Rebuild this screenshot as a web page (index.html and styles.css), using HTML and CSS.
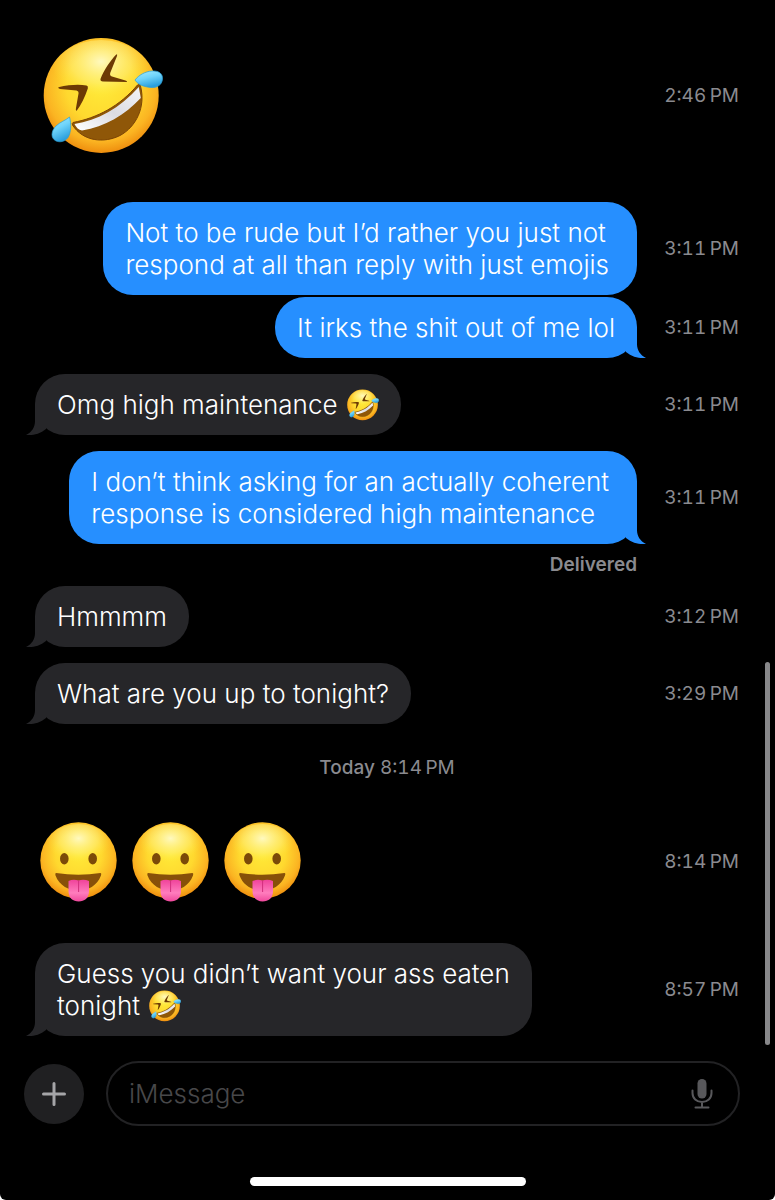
FILE: index.html
```html
<!DOCTYPE html>
<html lang="en">
<head>
    <meta charset="UTF-8">
    <meta name="viewport" content="width=device-width, initial-scale=1.0">
    <title>Messages</title>
    <link rel="stylesheet" href="styles.css">
</head>
<body>
    <!-- Shared emoji drawings -->
    <svg class="sprite" aria-hidden="true">
        <defs>
            <radialGradient id="face" cx="0.5" cy="0.42" r="0.6">
                <stop offset="0" stop-color="#ffea38"/>
                <stop offset="0.5" stop-color="#ffd92f"/>
                <stop offset="0.8" stop-color="#fbb422"/>
                <stop offset="1" stop-color="#ec860a"/>
            </radialGradient>
            <radialGradient id="shine" cx="0.5" cy="0.3" r="0.5">
                <stop offset="0" stop-color="#fffccf" stop-opacity="0.9"/>
                <stop offset="0.6" stop-color="#fff48a" stop-opacity="0.45"/>
                <stop offset="1" stop-color="#ffea3a" stop-opacity="0"/>
            </radialGradient>
            <linearGradient id="tear" x1="0" y1="0" x2="0.4" y2="1">
                <stop offset="0" stop-color="#a5ecff"/>
                <stop offset="0.5" stop-color="#6fd4fa"/>
                <stop offset="1" stop-color="#2b9fde"/>
            </linearGradient>
            <linearGradient id="teeth" x1="0" y1="1" x2="1" y2="0">
                <stop offset="0" stop-color="#fff"/>
                <stop offset="0.5" stop-color="#dcdce2"/>
                <stop offset="1" stop-color="#f4f4f6"/>
            </linearGradient>
            <linearGradient id="tongue" x1="0" y1="0" x2="0" y2="1">
                <stop offset="0" stop-color="#f0439b"/>
                <stop offset="0.6" stop-color="#ff7dbd"/>
                <stop offset="1" stop-color="#f0489c"/>
            </linearGradient>
        </defs>
        <symbol id="rofl" viewBox="0 0 120 120">
            <circle cx="58.2" cy="59.5" r="57.5" fill="url(#face)"/>
            <ellipse cx="58" cy="40" rx="50" ry="36" fill="url(#shine)"/>
            <path d="M15.3 51.3C27 48.5 36 48.4 43.5 49.4Q45.5 50 44.8 52.5C42 61 38 69 33.5 75Q32.4 74 33 72L35.6 57Q35.8 55 33.5 54.5L17 53Q15 52.5 15.3 51.3Z" fill="#6d3a04"/>
            <path d="M73.5 18.3C67 25 61 34 57.5 43Q57 45.4 60 45.5L83.8 46Q84.8 45.2 82.5 44.5L69 40.5Q66.5 39.5 67.2 37L74 20Q74.6 18.4 73.5 18.3Z" fill="#6d3a04"/>
            <path d="M30 86.5C54 82 77 70 94.5 49Q96.8 47.5 97.5 50C103 71 93 91 77 99.5C61 107.5 40 105.5 29.5 89Q28.8 87 30 86.5Z" fill="#8f5708" stroke="#7a4305"/>
            <path d="M31.5 88C54 84.5 77 72.5 95.8 51L97.8 62C82 79 62 90.5 39 94.5Q34 93.5 31.5 88Z" fill="url(#teeth)"/>
            <path d="M92 44C96 39 102 35.5 109 35C116 34.5 120 38 119.5 43C119 49 114 52 108 51.5C102 51 95 49 92 44Z" fill="url(#tear)" stroke="#2b9fd6" stroke-width="0.7"/>
            <path d="M26.5 81C28.5 88 28 97 25 101.5C21.5 106.5 14.5 107 11 103.5C7.5 100 9 94 13 90C17 86 22.5 84.5 26.5 81Z" fill="url(#tear)" stroke="#2b9fd6" stroke-width="0.7"/>
        </symbol>
        <symbol id="tongue-out" viewBox="0 0 78 80">
            <circle cx="38.5" cy="38.5" r="38.2" fill="url(#face)"/>
            <ellipse cx="38.5" cy="26" rx="33" ry="24" fill="url(#shine)"/>
            <ellipse cx="24.3" cy="36.7" rx="4.3" ry="5.7" fill="#7b4a08"/>
            <ellipse cx="52.7" cy="36.7" rx="4.3" ry="5.7" fill="#7b4a08"/>
            <path d="M16 51Q38.5 54.5 60.5 51Q61.8 51 61 53.5C57 64 48 68.5 38.5 68.5C29 68.5 19.5 64 15.5 53.5Q14.8 51 16 51Z" fill="#875009"/>
            <path d="M28.5 59Q33 57 38.5 58.5Q44 57 49 59V69C49 76 44.5 79.5 38.7 79.5C33 79.5 28.5 76 28.5 69Z" fill="url(#tongue)"/>
            <path d="M38.6 58.5V70" stroke="#d12f7c" fill="none"/>
        </symbol>
    </svg>

    <main class="chat">
        <ol class="messages">
            <li class="row received big">
                <svg class="emoji-large" role="img" aria-label="Rolling on the floor laughing"><use href="#rofl"/></svg>
                <time>2:46&#8201;PM</time>
            </li>
            <li class="row sent">
                <p class="bubble long">Not to be rude but I’d rather you just not<br>respond at all than reply with just emojis</p>
                <time>3:11&#8201;PM</time>
            </li>
            <li class="row sent follow">
                <p class="bubble tail">It irks the shit out of me lol</p>
                <time>3:11&#8201;PM</time>
            </li>
            <li class="row received">
                <p class="bubble tail">Omg high maintenance <svg class="emoji" role="img" aria-label="Rolling on the floor laughing"><use href="#rofl"/></svg></p>
                <time>3:11&#8201;PM</time>
            </li>
            <li class="row sent">
                <p class="bubble long tail">I don’t think asking for an actually coherent<br>response is considered high maintenance</p>
                <time>3:11&#8201;PM</time>
                <span class="status">Delivered</span>
            </li>
            <li class="row received after-status">
                <p class="bubble tail">Hmmmm</p>
                <time>3:12&#8201;PM</time>
            </li>
            <li class="row received">
                <p class="bubble tail">What are you up to tonight?</p>
                <time>3:29&#8201;PM</time>
            </li>
            <li class="divider"><b>Today</b> 8:14&#8201;PM</li>
            <li class="row received big">
                <div class="emoji-group">
                    <svg role="img" aria-label="Face with tongue"><use href="#tongue-out"/></svg>
                    <svg role="img" aria-label="Face with tongue"><use href="#tongue-out"/></svg>
                    <svg role="img" aria-label="Face with tongue"><use href="#tongue-out"/></svg>
                </div>
                <time>8:14&#8201;PM</time>
            </li>
            <li class="row received">
                <p class="bubble tail">Guess you didn’t want your ass eaten<br>tonight <svg class="emoji" role="img" aria-label="Rolling on the floor laughing"><use href="#rofl"/></svg></p>
                <time>8:57&#8201;PM</time>
            </li>
        </ol>
        <div class="scrollbar"></div>
    </main>

    <form class="composer">
        <button class="add" type="button" aria-label="Add">
            <svg width="24" height="24" viewBox="0 0 24 24"><path d="M12 1.5V22.5M1.5 12H22.5" stroke="#a5a5a8" stroke-width="3" stroke-linecap="round"/></svg>
        </button>
        <div class="field">
            <input type="text" placeholder="iMessage" aria-label="iMessage">
            <button class="mic" type="button" aria-label="Dictate">
                <svg width="22" height="30" viewBox="0 0 22 30" fill="none" stroke="#58585b" stroke-width="2" stroke-linecap="round">
                    <rect x="6.5" y="0" width="9" height="19.5" rx="4.5" fill="#58585b" stroke="none"/>
                    <path d="M1.5 11.5V14C1.5 19.5 5.5 23 11 23S20.5 19.5 20.5 14V11.5M11 23V28.5M4.5 28.5H17.5"/>
                </svg>
            </button>
        </div>
    </form>
    <div class="home-indicator"></div>
</body>
</html>
```

FILE: styles.css
```css
* {
    box-sizing: border-box;
}
html {
    background: #fff;
}
body {
    margin: 0;
    min-height: 100vh;
    background: #000;
    border-radius: 0 0 6px 6px;
    color: #fff;
    font-family: Inter, "Liberation Sans", sans-serif;
    font-size: 26px;
    font-weight: 350;
    line-height: 32px;
}
.sprite {
    position: absolute;
    width: 0;
    height: 0;
}
.chat {
    position: relative;
}
.messages {
    list-style: none;
    margin: 0;
    padding: 36px 36px 0 35px;
}
.row {
    display: grid;
    grid-template-columns: 1fr 102px;
    align-items: center;
    margin-top: 16px;
}
.row.follow {
    margin-top: 2px;
}
.row.after-status {
    margin-top: 0;
}
.row.big {
    margin: 0 0 41px;
}
.row.big:first-child {
    margin-bottom: 46px;
}
.bubble {
    position: relative;
    justify-self: start;
    margin: 0;
    padding: 15px 22px 14px;
    border-radius: 30px;
    background: #262629;
}
.bubble.long {
    padding-right: 28px;
}
.sent .bubble {
    justify-self: end;
    background: #268fff;
}
.tail::after {
    content: "";
    position: absolute;
    right: -10px;
    bottom: 0;
    width: 24px;
    height: 32px;
    background: inherit;
    clip-path: path("M3 2H14V18C14 24 17 29 23 32C17 33 9 31 3 26Z");
}
.received .tail::after {
    right: auto;
    left: -10px;
    transform: scaleX(-1);
}
time,
.status,
.divider {
    color: #8a8a8f;
    font-size: 19px;
    font-weight: 400;
    font-variant-numeric: tabular-nums;
    line-height: 24px;
}
time {
    text-align: right;
    white-space: nowrap;
}
.status {
    grid-column: 1;
    justify-self: end;
    font-weight: 600;
    line-height: 42px;
}
.divider {
    margin: 32px 0 42px;
    text-align: center;
}
.divider b {
    font-weight: 500;
}
.emoji {
    width: 32px;
    height: 32px;
    margin-left: 2px;
    vertical-align: bottom;
}
.emoji-large {
    width: 120px;
    height: 120px;
    margin-left: 8px;
}
.emoji-group {
    display: flex;
    gap: 14px;
    margin-left: 5px;
}
.emoji-group svg {
    width: 78px;
    height: 80px;
}
.scrollbar {
    position: absolute;
    right: 5px;
    bottom: -9px;
    width: 5px;
    height: 37%;
    border-radius: 3px;
    background: #88888a;
}
.composer {
    display: flex;
    align-items: center;
    gap: 22px;
    margin: 25px 35px 0 24px;
}
button {
    display: flex;
    align-items: center;
    justify-content: center;
    padding: 0;
    border: none;
    background: none;
    cursor: pointer;
}
.add {
    width: 60px;
    height: 60px;
    border-radius: 50%;
    background: #202022;
}
.field {
    display: flex;
    flex: 1;
    align-items: center;
    height: 65px;
    padding: 0 25px 0 21px;
    border: 2px solid #222224;
    border-radius: 33px;
}
.field input {
    flex: 1;
    min-width: 0;
    padding: 0;
    border: none;
    outline: none;
    background: none;
    color: #fff;
    font: inherit;
}
.field input::placeholder {
    color: #48484a;
}
.home-indicator {
    width: 276px;
    height: 9px;
    margin: 51px auto 0;
    border-radius: 5px;
    background: #fff;
}
```
